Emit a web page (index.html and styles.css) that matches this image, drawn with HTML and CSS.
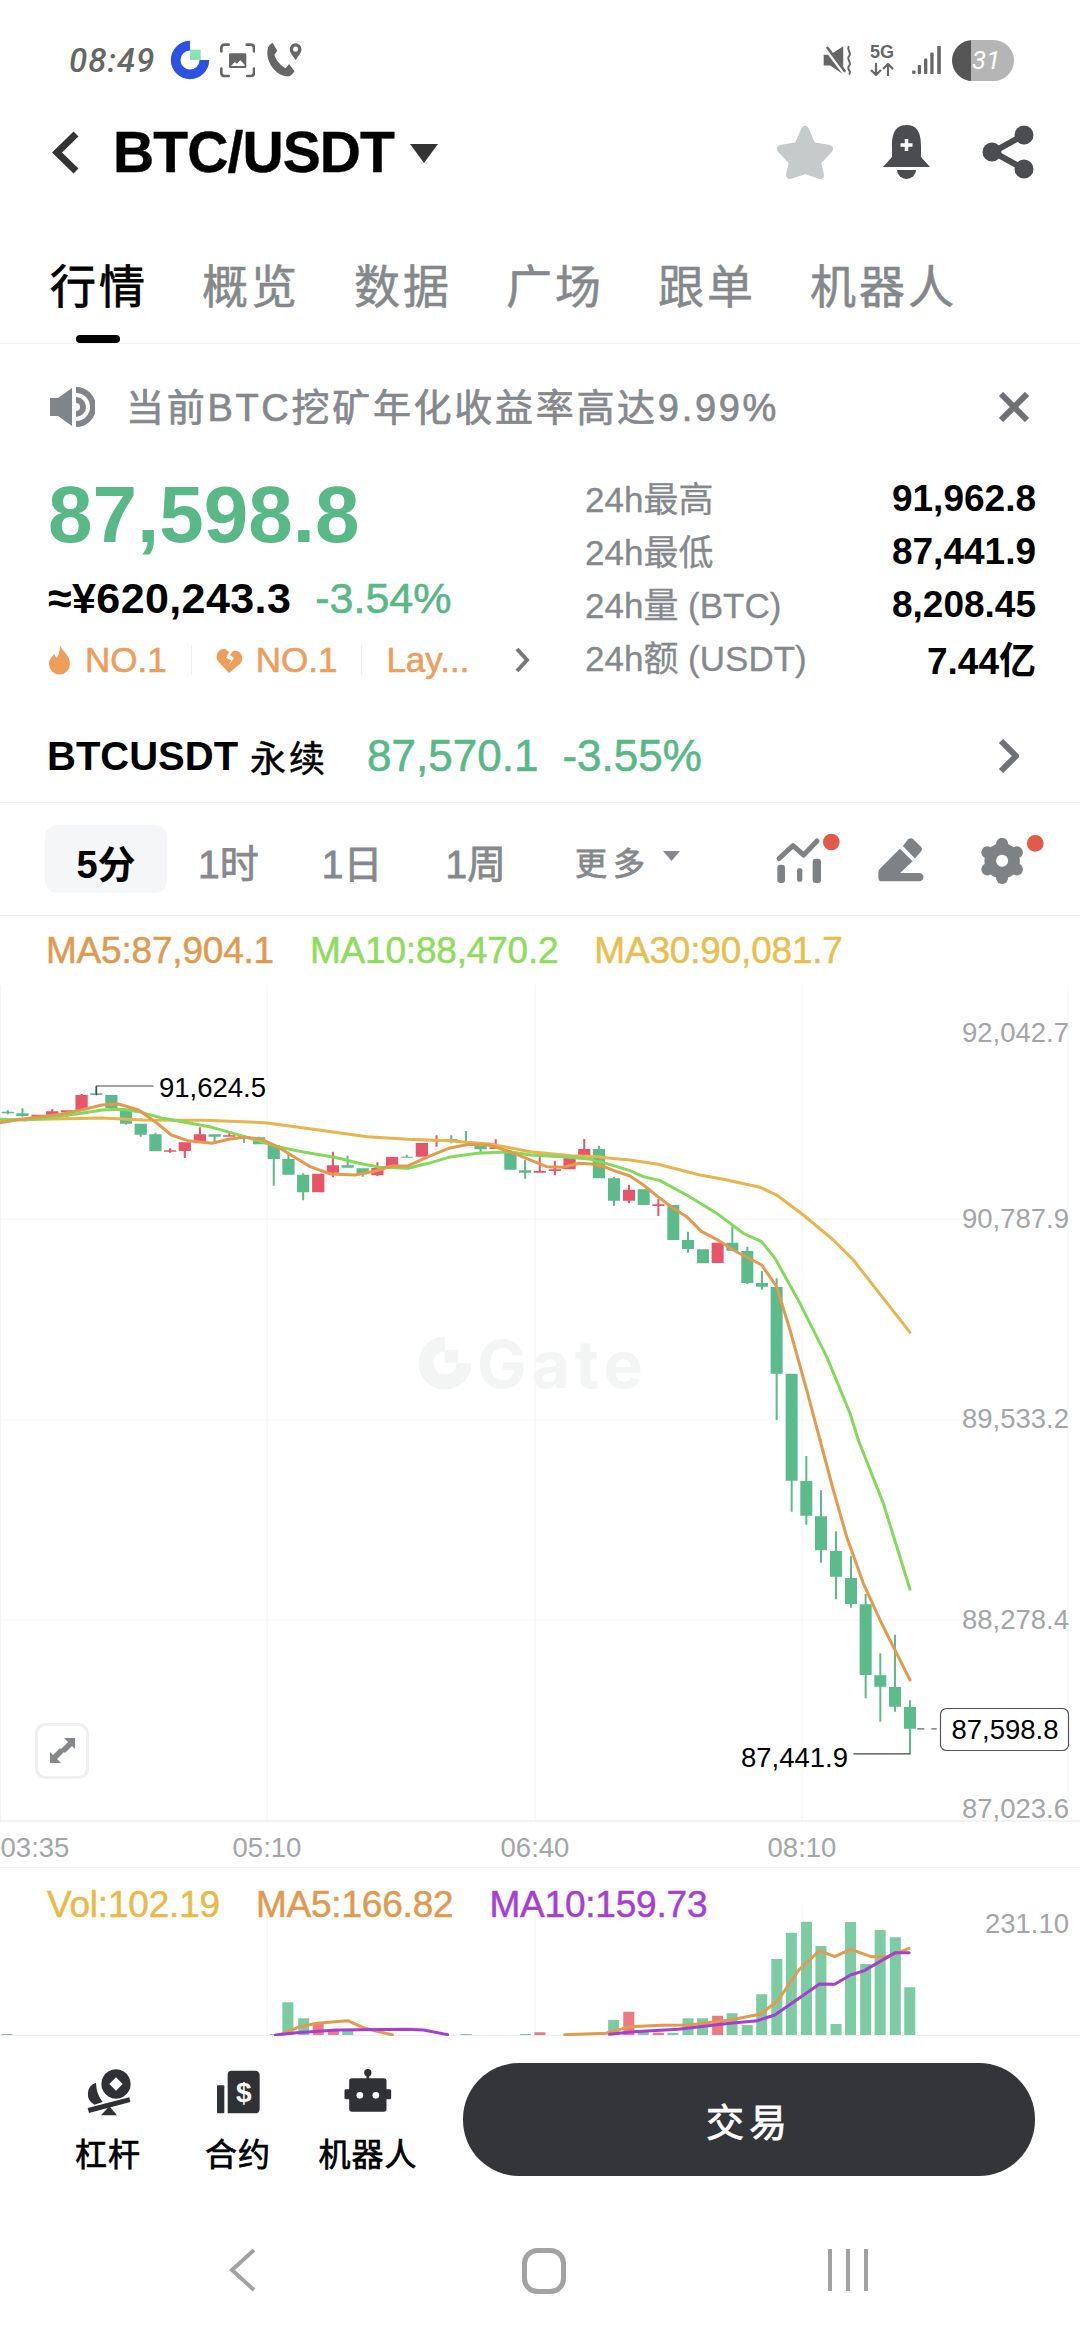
FILE: index.html
```html
<!DOCTYPE html>
<html lang="zh-CN">
<head>
<meta charset="utf-8">
<title>BTC/USDT</title>
<link rel="stylesheet" href="styles.css">
</head>
<body>
<div class="page">

  <div class="status">
    <span class="time">08:49</span>
    <svg class="ic-gate" viewBox="30 28 120 120"><path class="gate-ring" d="M90 45A43 43 0 1 0 133 88"/><rect class="gate-sq" x="90" y="57" width="32" height="31"/></svg>
    <svg class="ic-shot" viewBox="180 35 105 105"><path class="shot-line" d="M184 60V50q0-10 10-10h12M260 40h12q10 0 10 10v10M282 112v12q0 10-10 10h-10M206 134h-12q-10 0-10-10v-12"/><rect class="st-fill" x="207" y="66" width="52" height="44" rx="4"/><path class="shot-hill" d="M213 104l11-12 7 5 10-10 13 13v4z"/></svg>
    <svg class="ic-call" viewBox="315 33 115 110"><path class="st-fill" d="M322 60C322 48 330 38 338 36L352 60 343 72C348 90 365 108 378 113L388 100 405 122C398 132 390 140 378 138 345 132 318 95 322 60z"/><path class="st-fill" fill-rule="evenodd" d="M408 88C398 72 390 65 390 55a18 18 0 0 1 36 0C426 65 418 72 408 88zM408 47a8 8 0 1 0 .01 0z"/></svg>
    <span class="status-gap"></span>
    <svg class="ic-mute" viewBox="38 40 95 92"><path class="st-fill" d="M40 70H60L100 44V130L60 103H40z"/><path class="mute-cut" d="M44 46l62 82"/><path class="mute-slash" d="M50 46l56 76"/><path class="mute-wave" d="M118 44c-10 10 10 20 0 30s10 20 0 30 10 16 0 26"/></svg>
    <div class="net"><span class="net-5g">5G</span><svg class="ic-arrows" viewBox="0 0 25 13"><path d="M6 0v12M1 7l5 5 5-5M18 13V1M13 6l5-5 5 5"/></svg></div>
    <svg class="ic-signal" viewBox="305 50 87 85"><rect class="st-fill" x="305" y="124" width="10" height="11" rx="3"/><rect class="st-fill" x="322" y="108" width="10" height="27" rx="3"/><rect class="st-fill" x="341" y="88" width="10" height="47" rx="3"/><rect class="st-fill" x="360" y="70" width="10" height="65" rx="3"/><rect class="st-fill" x="381" y="50" width="11" height="85" rx="3"/></svg>
    <div class="battery"><span class="batt-dark"></span><span class="batt-light">31</span></div>
  </div>

  <div class="header">
    <svg class="ic-back" viewBox="0 0 27 43"><path d="M24 3L5 21.500 24 40"/></svg>
    <span class="pair">BTC/USDT</span>
    <svg class="ic-tri" viewBox="0 0 28 19"><path d="M0 0h28L14 19z"/></svg>
    <span class="grow"></span>
    <svg class="ic-star" viewBox="0 0 58 54"><path d="M29 5l7 16 17 3-12 13 3 13-15-5-15 5 3-13L5 24l17-3z"/></svg>
    <svg class="ic-bell" viewBox="0 0 49 54"><path class="bell-body" d="M24.500 0C37 0 39 11 39 21v11l9 10H1l9-10V21C10 11 12 0 24.500 0z"/><path class="bell-body" d="M15 45h19a9.500 9 0 0 1-19 0z"/><path class="bell-plus" d="M24.500 14v12M18.500 20h12"/></svg>
    <svg class="ic-share" viewBox="0 0 52 54"><path class="share-line" d="M42 10L11 27l31 17"/><circle class="bell-body" cx="42" cy="10" r="9.500"/><circle class="bell-body" cx="10" cy="27" r="9.500"/><circle class="bell-body" cx="42" cy="44" r="9.500"/></svg>
  </div>

  <div class="tabs">
    <div class="tab tab-on">行情<span class="tab-bar"></span></div>
    <div class="tab">概览</div>
    <div class="tab">数据</div>
    <div class="tab">广场</div>
    <div class="tab">跟单</div>
    <div class="tab">机器人</div>
  </div>

  <div class="notice">
    <svg class="ic-speaker" viewBox="0 0 45 40"><path d="M0 11h8L22 1v38L8 29H0z"/><path class="speak-arc" d="M26 3a17 17 0 0 1 0 34M26 13a7 7 0 0 1 0 14"/></svg>
    <span class="notice-text">当前BTC挖矿年化收益率高达9.99%</span>
    <span class="grow"></span>
    <svg class="ic-close" viewBox="0 0 32 30"><path d="M3 2l26 26M29 2L3 28"/></svg>
  </div>

  <div class="stats">
    <div class="stats-left">
      <div class="price">87,598.8</div>
      <div class="quote"><span class="fiat">≈¥620,243.3</span><span class="chg">-3.54%</span></div>
      <div class="ranks">
        <svg class="ic-flame" viewBox="0 0 23 30"><path d="M12 0c2 6 10 10 10 19a10.500 10.500 0 0 1-21 0c0-5 3-7 5-10 1 2 2 3 3 4 2-4 3-8 3-13z"/></svg>
        <span class="rank">NO.1</span>
        <span class="rank-sep"></span>
        <svg class="ic-heart" viewBox="0 0 27 27"><path d="M13 26L2 14C-2 8 3 1 9 2l4 3-3 6 5 2-2 5 5-7-4-3 3-4c6-2 12 5 8 12z"/></svg>
        <span class="rank">NO.1</span>
        <span class="rank-sep"></span>
        <span class="rank">Lay...</span>
        <svg class="ic-more" viewBox="0 0 16 26"><path d="M3 2l10 11L3 24"/></svg>
      </div>
    </div>
    <div class="stats-right">
      <div class="stat"><span class="stat-k">24h最高</span><span class="stat-v">91,962.8</span></div>
      <div class="stat"><span class="stat-k">24h最低</span><span class="stat-v">87,441.9</span></div>
      <div class="stat"><span class="stat-k">24h量 (BTC)</span><span class="stat-v">8,208.45</span></div>
      <div class="stat"><span class="stat-k">24h额 (USDT)</span><span class="stat-v">7.44亿</span></div>
    </div>
  </div>

  <div class="perp">
    <span class="perp-name">BTCUSDT</span>
    <span class="perp-kind">永续</span>
    <span class="perp-price">87,570.1</span>
    <span class="perp-chg">-3.55%</span>
    <span class="grow"></span>
    <svg class="ic-perp" viewBox="0 0 21 36"><path d="M3 3l15 15L3 33"/></svg>
  </div>

  <div class="tfbar">
    <span class="tf-pill">5分</span>
    <span class="tf">1时</span>
    <span class="tf">1日</span>
    <span class="tf tf-week">1周</span>
    <span class="tf tf-more">更多</span>
    <svg class="ic-tf-tri" viewBox="0 0 17 10"><path d="M0 0h17L8.500 10z"/></svg>
    <span class="grow"></span>
    <svg class="ic-ind" viewBox="30 18 195 150"><path class="ind-line" d="M42 95L84 56l32 28 40-42"/><rect class="tool-fill" x="37" y="113" width="23" height="55" rx="9"/><rect class="tool-fill" x="96" y="124" width="16" height="40" rx="6"/><rect class="tool-fill" x="143" y="95" width="25" height="73" rx="9"/><circle class="dot" cx="199" cy="45" r="25"/></svg>
    <svg class="ic-draw" viewBox="335 30 140 140"><path class="tool-fill" d="M412 60L428 40q8-6 15 0L466 62q6 7 0 14L448 97z"/><path class="tool-fill" d="M403 68L441 105 404 140H461a12.500 12.500 0 0 1 0 25H350q-11 0-11-11V138q0-6 4-10z"/></svg>
    <svg class="ic-gear" viewBox="640 18 200 155"><circle class="tool-fill" cx="712" cy="98" r="53"/><circle class="tool-fill" cx="712" cy="47" r="18"/><circle class="tool-fill" cx="756" cy="72.500" r="18"/><circle class="tool-fill" cx="756" cy="123.500" r="18"/><circle class="tool-fill" cx="712" cy="149" r="18"/><circle class="tool-fill" cx="668" cy="123.500" r="18"/><circle class="tool-fill" cx="668" cy="72.500" r="18"/><circle class="gear-hole" cx="712" cy="98" r="18"/><circle class="dot" cx="811" cy="46" r="25"/></svg>
  </div>

  <div class="malegend">
    <span class="c-ma5">MA5:87,904.1</span>
    <span class="c-ma10">MA10:88,470.2</span>
    <span class="c-ma30">MA30:90,081.7</span>
  </div>

  <svg class="chart" viewBox="0 985 1080 883">
    <path class="grid" d="M0 1219H1068M0 1420H1068M0 1620H1068M0.500 985V1821M267 985V1821M535 985V1821M802 985V1821M1068 985V1821"/>
    <path class="axis" d="M0 1821H1080M0 1868H1080"/>

    <path class="wm-ring" d="M445 1344A19 19 0 1 0 464 1363"/>
    <rect class="wm-sq" x="445" y="1350" width="13" height="13"/>
    <text class="wm-text" x="477" y="1388">Gate</text>

    <g transform="translate(0 1040) scale(.408 .3333)">
      <path class="up" d="M4 215h30V220h-30zM16.500 211h5V223h-5zM40 220h30V228h-30zM52.500 205h5V230h-5zM221 160h30V165h-30zM233.500 138h5V165h-5zM258 165h30V204h-30zM270.500 165h5V210h-5zM294 206h30V251h-30zM306.500 206h5V254h-5zM330 251h30V284h-30zM342.500 251h5V290h-5zM366 283h30V334h-30zM378.500 278h5V334h-5zM511 283h30V290h-30zM523.500 283h5V306h-5zM583 288h30V292h-30zM595.500 285h5V308h-5zM620 292h30V313h-30zM632.500 290h5V313h-5zM656 315h30V357h-30zM668.500 315h5V437h-5zM692 357h30V404h-30zM704.500 335h5V404h-5zM728 404h30V457h-30zM740.500 400h5V481h-5zM837 376h30V383h-30zM849.500 347h5V383h-5zM874 385h30V403h-30zM886.500 385h5V410h-5zM982 350h30V353h-30zM994.500 344h5V353h-5zM1091 297h30V303h-30zM1103.500 286h5V310h-5zM1127 303h30V307h-30zM1139.500 273h5V310h-5zM1163 318h30V328h-30zM1175.500 310h5V338h-5zM1236 335h30V389h-30zM1272 391h30V398h-30zM1284.500 360h5V416h-5zM1453 327h30V415h-30zM1465.500 317h5V415h-5z"/>
      <path class="dn" d="M77 224h30V230h-30zM89.500 224h5V235h-5zM113 214h30V226h-30zM125.500 207h5V228h-5zM149 211h30V216h-30zM161.500 211h5V232h-5zM185 165h30V210h-30zM197.500 162h5V212h-5zM402 331h30V335h-30zM414.500 325h5V338h-5zM438 307h30V333h-30zM450.500 307h5V354h-5zM475 283h30V305h-30zM487.500 262h5V305h-5zM547 286h30V290h-30zM559.500 278h5V290h-5zM765 401h30V457h-30zM801 376h30V398h-30zM813.500 335h5V412h-5zM910 384h30V406h-30zM922.500 367h5V408h-5zM946 351h30V378h-30zM1019 309h30V350h-30zM1055 300h30V304h-30zM1067.500 286h5V320h-5zM1200 322h30V327h-30zM1212.500 298h5V327h-5zM1308 393h30V398h-30zM1320.500 348h5V398h-5zM1345 388h30V393h-30zM1357.500 362h5V406h-5zM1381 352h30V388h-30zM1417 327h30V345h-30zM1429.500 297h5V345h-5z"/>
      <polyline class="line l-peak" points="236,165 236,138 375,138"/>
      <polyline class="line l-ma30" points="0,240 100,238 250,234 350,240 500,241 650,248 750,265 900,290 1000,298 1100,302 1200,312 1300,335 1400,347 1470,350"/>
      <polyline class="line l-ma10" points="0,238 60,240 130,232 200,220 250,210 300,208 340,215 400,235 460,248 520,262 600,290 680,320 740,335 820,352 880,370 930,382 1000,385 1050,370 1100,352 1170,340 1250,335 1300,345 1380,350 1450,358 1470,368"/>
      <polyline class="line l-ma5" points="0,248 50,238 100,230 150,222 200,210 250,195 290,192 340,210 380,245 420,285 460,302 520,310 560,298 600,292 640,297 680,320 720,350 760,380 810,402 870,405 920,393 960,378 1000,378 1050,350 1100,325 1150,313 1200,316 1250,335 1290,355 1340,380 1380,382 1420,370 1450,372 1470,378"/>
    </g>

    <g transform="translate(600 1100) scale(.3333)">
      <path class="up" d="M24 235h36V302h-36zM39 230h6V318h-6zM113 268h36V315h-36zM202 315h36V420h-36zM246 420h36V447h-36zM261 395h6V458h-6zM291 448h36V490h-36zM379 428h36V452h-36zM394 380h6V452h-6zM424 453h36V549h-36zM439 440h6V552h-6zM468 549h36V560h-36zM483 514h6V569h-6zM512 561h36V821h-36zM527 535h6V960h-6zM557 821h36V1020h-36z"/>
      <path class="dn" d="M69 269h36V302h-36zM84 255h6V310h-6zM157 313h36V318h-36zM172 298h6V348h-6zM335 428h36V489h-36z"/>
      <polyline class="line l-ma30" points="0,172 90,180 170,192 300,225 370,238 480,262 530,285 610,345 700,420 760,480 930,697"/>
      <polyline class="line l-ma10" points="0,185 90,212 130,230 180,242 260,285 350,340 430,400 485,425 525,475 600,610 680,770 750,940 775,1020"/>
      <polyline class="line l-ma5" points="0,195 42,212 90,228 130,255 180,295 220,325 260,350 305,395 350,418 400,450 485,495 530,560 570,690 620,870 660,1020"/>
    </g>

    <g transform="translate(700 1440) scale(.3333)">
      <path class="up" d="M257 0h36V122h-36zM272 0h6V215h-6zM301 123h36V227h-36zM316 48h6V254h-6zM345 229h36V331h-36zM360 151h6V368h-6zM390 333h36V410h-36zM405 274h6V478h-6zM435 414h36V492h-36zM450 349h6V503h-6zM479 493h36V705h-36zM494 462h6V775h-6zM523 706h36V740h-36zM538 640h6V845h-6zM567 741h36V800h-36zM582 584h6V815h-6zM612 801h36V866h-36zM627 781h6V942h-6z"/>
      <polyline class="line l-ma10" points="475,0 550,190 630,448"/>
      <polyline class="line l-ma5" points="360,0 400,150 440,290 490,430 540,540 590,640 630,720"/>
      <polyline class="line l-peak" points="462,942 630,942"/>
      <path class="line l-dash" d="M652 867H710"/>
    </g>

    <text class="t-dark" x="159" y="1097">91,624.5</text>
    <text class="t-dark" x="741" y="1767">87,441.9</text>

    <text class="t-axis t-end" x="1069" y="1042">92,042.7</text>
    <text class="t-axis t-end" x="1069" y="1228">90,787.9</text>
    <text class="t-axis t-end" x="1069" y="1428">89,533.2</text>
    <text class="t-axis t-end" x="1069" y="1629">88,278.4</text>
    <text class="t-axis t-end" x="1069" y="1818">87,023.6</text>

    <rect class="tag" x="940.500" y="1708.500" width="128" height="42" rx="6"/>
    <text class="t-dark" x="951.500" y="1739">87,598.8</text>

    <text class="t-axis t-mid" x="35" y="1857">03:35</text>
    <text class="t-axis t-mid" x="267" y="1857">05:10</text>
    <text class="t-axis t-mid" x="535" y="1857">06:40</text>
    <text class="t-axis t-mid" x="802" y="1857">08:10</text>

    <rect class="exp-box" x="36.500" y="1724.500" width="51" height="53" rx="9"/>
    <path class="exp-arrow" d="M75 1738h-11l4 4-7 7 4 4 7-7 3 3zM50 1763h11l-4-4 7-7-4-4-7 7-3-3z"/>
  </svg>

  <div class="vol">
    <div class="vol-legend">
      <span class="c-vol">Vol:102.19</span>
      <span class="c-ma5">MA5:166.82</span>
      <span class="c-pur">MA10:159.73</span>
    </div>
    <svg class="vol-svg" viewBox="0 1868 1080 168">
      <path class="grid" d="M267 1915V2035M535 1915V2035M802 1905V2035"/>
      <path class="axis" d="M0 2035.500H1080"/>
      <text class="t-axis t-end" x="1069" y="1933">231.10</text>
      <g transform="translate(0 1860) scale(.6887 .3333)">
        <path class="vol-up" d="M2 522h16V525H2zM392 522h16V525h-16zM410 427h16V525h-16zM433 475h16V525h-16zM497 510h16V525h-16zM669 522h16V525h-16zM755 522h16V525h-16zM819 522h16V525h-16zM840 522h16V525h-16zM862 520h16V525h-16zM883 480h16V525h-16zM926 510h16V525h-16zM969 518h16V525h-16zM991 475h16V525h-16zM1012 475h16V525h-16zM1055 460h16V525h-16zM1077 495h16V525h-16zM1098 403h16V525h-16zM1120 297h16V525h-16zM1141 218h16V525h-16zM1163 185h16V525h-16zM1184 258h16V525h-16zM1206 492h16V525h-16zM1227 186h16V525h-16zM1249 312h16V525h-16zM1270 210h16V525h-16zM1292 232h16V525h-16zM1313 382h16V525h-16z"/>
        <path class="vol-dn" d="M454 490h16V525h-16zM476 510h16V525h-16zM776 517h16V525h-16zM905 455h16V525h-16zM948 518h16V525h-16zM1034 467h16V525h-16z"/>
        <polyline class="line l-ma5" points="410,522 435,500 460,490 505,482 530,505 570,525"/>
        <polyline class="line l-ma5" points="820,524 880,520 915,500 960,496 1000,495 1060,480 1105,462 1130,420 1160,330 1190,272 1212,290 1235,268 1265,290 1290,290 1320,265"/>
        <polyline class="line l-pur" points="400,525 430,518 490,510 590,508 615,510 650,524"/>
        <polyline class="line l-pur" points="885,523 920,515 985,508 1060,490 1100,482 1125,465 1190,372 1212,373 1235,345 1255,332 1300,278 1320,278"/>
      </g>
    </svg>
  </div>

  <div class="actions">
    <div class="act">
      <svg class="ic-lever" viewBox="72 40 141 144"><path fill-rule="evenodd" d="M165 44a44 44 0 1 1-.01 0zM165 68l-20 20 20 20 20-20z"/><path d="M105 84A36 36 0 0 0 100 150L125 142C112 125 105 105 105 84z"/><path d="M80 160L205 128 208 142 84 175z"/><path d="M145 155L168 182H120z"/></svg>
      <span class="act-label">杠杆</span>
    </div>
    <div class="act">
      <svg class="ic-contract" viewBox="465 40 135 144"><rect x="468" y="92" width="22" height="84" rx="3"/><path d="M500 60q0-12 12-12h70q14 0 14 14v100q0 14-14 14H500z"/><text class="contract-s" x="548" y="143">$</text></svg>
      <span class="act-label">合约</span>
    </div>
    <div class="act">
      <svg class="ic-robot" viewBox="850 36 143 144"><circle cx="921" cy="50" r="11"/><rect x="917" y="58" width="8" height="12"/><rect x="865" y="67" width="112" height="100" rx="8"/><rect x="851" y="100" width="20" height="30" rx="4"/><rect x="971" y="100" width="20" height="30" rx="4"/><circle class="robot-eye" cx="897" cy="118" r="10"/><circle class="robot-eye" cx="945" cy="118" r="10"/></svg>
      <span class="act-label">机器人</span>
    </div>
    <div class="trade">交易</div>
  </div>

  <div class="sysnav">
    <svg class="nav-back" viewBox="0 0 27 44"><path d="M25 2L3 22l22 20"/></svg>
    <svg class="nav-home" viewBox="0 0 44 46"><rect x="2.500" y="2.500" width="39" height="41" rx="13"/></svg>
    <svg class="nav-recent" viewBox="0 0 40 44"><path d="M2 1v42M20 1v42M38 1v42"/></svg>
  </div>

</div>
</body>
</html>
```

FILE: styles.css
```css
* { box-sizing: border-box; }
html, body { margin: 0; padding: 0; background: #fff; }
body { font-family: "Liberation Sans", "Noto Sans CJK SC", sans-serif; color: #000; }
svg { display: block; flex: none; }
.page { width: 1080px; height: 2340px; overflow: hidden; display: flex; flex-direction: column; background: #fff; }
.grow { flex: 1; }

/* status bar */
.status { height: 120px; display: flex; align-items: center; padding: 0 66px 0 69px; }
.time { font: italic 500 33px "Roboto", sans-serif; color: #666; width: 101px; letter-spacing: 1px; }
.ic-gate { width: 40px; height: 40px; }
.gate-ring { fill: none; stroke: #2b52e0; stroke-width: 29; }
.gate-sq { fill: #86e3b6; }
.ic-shot { width: 35px; height: 35px; margin-left: 10px; }
.shot-line { fill: none; stroke: #666; stroke-width: 8; stroke-linecap: round; }
.shot-hill { fill: #fff; }
.ic-call { width: 38px; height: 36px; margin-left: 10px; }
.st-fill { fill: #666; }
.mute-cut { fill: none; stroke: #fff; stroke-width: 14; }
.mute-slash { fill: none; stroke: #666; stroke-width: 8; }
.mute-wave { fill: none; stroke: #666; stroke-width: 6; }
.status-gap { flex: 1; }
.ic-mute { width: 31px; height: 30px; }
.net { width: 26px; margin-left: 15px; display: flex; flex-direction: column; align-items: center; gap: 2px; color: #666; }
.net-5g { font: 700 18px/17px "Liberation Sans", sans-serif; }
.ic-arrows { width: 25px; height: 13px; }
.ic-arrows path { fill: none; stroke: #666; stroke-width: 2.200; }
.ic-signal { width: 29px; height: 28px; margin-left: 17px; }
.battery { width: 62px; height: 41px; margin-left: 11px; border-radius: 21px; overflow: hidden; display: flex; }
.batt-dark { width: 19px; background: #555; }
.batt-light { flex: 1; background: #b5b5b5; color: #fff; font: italic 400 26px/41px "Roboto", sans-serif; padding-left: 1px; }

/* header */
.header { height: 64px; display: flex; align-items: center; padding: 0 46px 0 52px; }
.ic-back { width: 27px; height: 43px; }
.ic-back path { fill: none; stroke: #333; stroke-width: 7; }
.pair { margin-left: 34px; font-size: 57px; font-weight: 700; letter-spacing: -.9px; line-height: 64px; -webkit-text-stroke: .4px #000; }
.ic-tri { width: 28px; height: 19px; margin-left: 16px; margin-top: 3px; fill: #333; }
.ic-star { width: 58px; height: 54px; }
.ic-star path { fill: #c6cacb; stroke: #c6cacb; stroke-width: 8; stroke-linejoin: round; }
.ic-bell { width: 49px; height: 54px; margin-left: 48px; }
.bell-body { fill: #4b4c50; }
.bell-plus { fill: none; stroke: #fff; stroke-width: 3.500; }
.ic-share { width: 52px; height: 54px; margin-left: 51px; }
.share-line { fill: none; stroke: #4b4c50; stroke-width: 6; }

/* tabs */
.tabs { height: 160px; padding: 78px 0 0 50px; display: flex; gap: 54px; border-bottom: 1px solid #eeeff0; }
.tab { font-size: 46px; line-height: 50px; letter-spacing: 3px; color: #85888b; position: relative; -webkit-text-stroke: .6px #85888b; }
.tab-on { color: #000; -webkit-text-stroke: .8px #000; }
.tab-bar { position: absolute; left: 26px; top: 73px; width: 44px; height: 8px; border-radius: 4px; background: #000; }

/* notice */
.notice { height: 126px; display: flex; align-items: center; padding: 0 50px; }
.ic-speaker { width: 45px; height: 40px; fill: #80858a; }
.speak-arc { fill: none; stroke: #80858a; stroke-width: 6; }
.notice-text { margin-left: 31px; font-size: 38px; letter-spacing: 2.700px; color: #85888c; white-space: nowrap; margin-top: -6px; -webkit-text-stroke: .7px #85888c; }
.ic-close { width: 32px; height: 30px; }
.ic-close path { fill: none; stroke: #6e7175; stroke-width: 6; }

/* stats */
.stats { height: 240px; display: flex; }
.stats-left { width: 585px; padding-left: 48px; }
.price { font-size: 80px; font-weight: 700; line-height: 90px; color: #58b886; }
.quote { margin-top: 10px; display: flex; gap: 24px; line-height: 56px; font-size: 43px; }
.fiat { font-weight: 700; letter-spacing: .4px; }
.chg { color: #58b886; -webkit-text-stroke: .6px #58b886; }
.ranks { margin-top: 12px; height: 44px; display: flex; align-items: center; }
.ic-flame { width: 23px; height: 30px; fill: #ee9d5b; margin-right: 14px; }
.ic-heart { width: 27px; height: 27px; fill: #ee9d5b; margin-right: 13px; }
.rank { font-size: 35px; line-height: 44px; color: #ee9d5b; white-space: nowrap; -webkit-text-stroke: .6px #ee9d5b; }
.rank-sep { width: 1px; height: 30px; background: #eee; margin: 0 24px; }
.ic-more { width: 16px; height: 26px; margin-left: 45px; }
.ic-more path { fill: none; stroke: #777; stroke-width: 4; }
.stats-right { flex: 1; padding: 2px 44px 0 0; }
.stat { height: 53px; display: flex; justify-content: space-between; align-items: center; }
.stat-k { font-size: 35px; color: #85888c; margin-top: -5px; -webkit-text-stroke: .3px #85888c; }
.stat-v { font-size: 37px; font-weight: 700; }

/* perpetual row */
.perp { height: 93px; display: flex; align-items: center; padding: 0 61px 0 47px; border-bottom: 1px solid #eeeff0; }
.perp-name { font-size: 40px; font-weight: 700; }
.perp-kind { font-size: 36px; margin-left: 12px; letter-spacing: 3px; -webkit-text-stroke: .5px #000; }
.perp-price { font-size: 44px; color: #58b886; margin-left: 39px; -webkit-text-stroke: .6px #58b886; }
.perp-chg { font-size: 44px; color: #58b886; margin-left: 24px; -webkit-text-stroke: .6px #58b886; }
.ic-perp { width: 21px; height: 36px; }
.ic-perp path { fill: none; stroke: #6e7175; stroke-width: 6; }

/* timeframe bar */
.tfbar { height: 113px; display: flex; align-items: center; padding: 0 35px 0 45px; border-bottom: 1px solid #eeeff0; }
.tf-pill { width: 122px; height: 68px; background: #f5f6f7; border-radius: 12px; display: flex; align-items: center; justify-content: center; padding-top: 4px; font-size: 38px; font-weight: 700; margin-right: 31px; }
.tf { font-size: 39px; color: #85888c; padding-top: 4px; margin-right: 63px; white-space: nowrap; -webkit-text-stroke: .8px #85888c; }
.tf-week { margin-right: 69px; }
.tf-more { font-size: 32px; letter-spacing: 6px; margin-right: 0; }
.ic-tf-tri { width: 17px; height: 10px; fill: #85888c; margin-left: 12px; margin-top: -6px; }
.ic-ind { width: 65px; height: 50px; margin-top: -2px; }
.ic-draw { width: 47px; height: 47px; margin-left: 37px; margin-top: 0; }
.ic-gear { width: 67px; height: 52px; margin-left: 54px; margin-top: 2px; }
.ind-line { fill: none; stroke: #7f8285; stroke-width: 15; stroke-linecap: round; stroke-linejoin: round; }
.tool-fill { fill: #7f8285; }
.gear-hole { fill: #fff; }
.dot { fill: #e25a4a; }

/* MA legend */
.malegend { height: 69px; padding: 0 46px; display: flex; gap: 36px; align-items: center; font-size: 37px; letter-spacing: -.2px; }
.c-ma5 { color: #e09a4e; -webkit-text-stroke: .5px #e09a4e; }
.c-ma10 { color: #8fdc5c; -webkit-text-stroke: .5px #8fdc5c; }
.c-ma30 { color: #e8bf4e; -webkit-text-stroke: .5px #e8bf4e; }
.c-vol { color: #e9b949; -webkit-text-stroke: .5px #e9b949; }
.c-pur { color: #a63fd1; -webkit-text-stroke: .5px #a63fd1; }

/* chart */
.chart { width: 1080px; height: 883px; }
.grid { fill: none; stroke: #f3f4f5; stroke-width: 1; }
.axis { fill: none; stroke: #eeeff0; stroke-width: 1.500; }
.wm-ring { fill: none; stroke: #f3f4f4; stroke-width: 15; }
.wm-sq { fill: #f3f4f4; }
.wm-text { font: 700 66px "Inter", sans-serif; letter-spacing: 5px; fill: #f3f4f4; }
.up { fill: #5bbb8a; }
.dn { fill: #e8556a; }
.line { fill: none; stroke-width: 3; vector-effect: non-scaling-stroke; stroke-linejoin: round; stroke-linecap: round; }
.l-ma5 { stroke: #e39a4c; }
.l-ma10 { stroke: #84d95a; }
.l-ma30 { stroke: #e8b44c; }
.l-pur { stroke: #a63fd1; }
.l-peak { stroke: #444; stroke-width: 1.200; }
.l-dash { stroke: #666; stroke-width: 1.200; stroke-dasharray: 7 7; stroke-linecap: butt; }
.t-dark { font: 400 27.500px "Liberation Sans", sans-serif; fill: #000; }
.t-axis { font: 400 27.500px "Liberation Sans", sans-serif; fill: #a3a5a8; }
.t-end { text-anchor: end; }
.t-mid { text-anchor: middle; }
.tag { fill: #fff; stroke: #555; stroke-width: 1.200; }
.exp-box { fill: #fff; stroke: #eeeff0; stroke-width: 3; }
.exp-arrow { fill: #85888b; }

/* volume */
.vol { position: relative; height: 168px; }
.vol-legend { position: absolute; left: 47px; top: 17px; display: flex; gap: 36px; font-size: 37px; line-height: 40px; letter-spacing: -.2px; }
.vol-svg { width: 1080px; height: 168px; }
.vol-up { fill: #7ccba2; }
.vol-dn { fill: #ec7a80; }

/* actions */
.actions { height: 164px; display: flex; align-items: flex-start; padding: 27px 45px 0 43px; }
.act { display: flex; flex-direction: column; align-items: center; width: 130px; padding-top: 5px; }
.ic-lever, .ic-contract, .ic-robot { height: 48px; fill: #2f3135; }
.ic-lever { width: 47px; }
.ic-contract { width: 45px; }
.ic-robot { width: 48px; }
.act-label { margin-top: 21px; font-size: 32px; line-height: 36px; letter-spacing: 1px; white-space: nowrap; -webkit-text-stroke: .7px #000; }
.contract-s { font: 700 84px "Liberation Sans", sans-serif; fill: #fff; text-anchor: middle; }
.robot-eye { fill: #fff; }
.trade { margin-left: 30px; width: 572px; height: 113px; border-radius: 56px; background: #333538; color: #fff; font-size: 38px; letter-spacing: 5px; display: flex; align-items: center; justify-content: center; -webkit-text-stroke: .8px #fff; }

/* system nav */
.sysnav { flex: 1; position: relative; display: flex; align-items: flex-start; padding: 48px 0 0 229px; }
.nav-back { width: 27px; height: 44px; }
.nav-home { width: 44px; height: 46px; margin-left: 266px; }
.nav-recent { width: 40px; height: 44px; margin-left: 262px; }
.nav-back path, .nav-home rect, .nav-recent path { fill: none; stroke: #a0a2a4; stroke-width: 4; }
.nav-home rect { stroke-width: 5; }
```
